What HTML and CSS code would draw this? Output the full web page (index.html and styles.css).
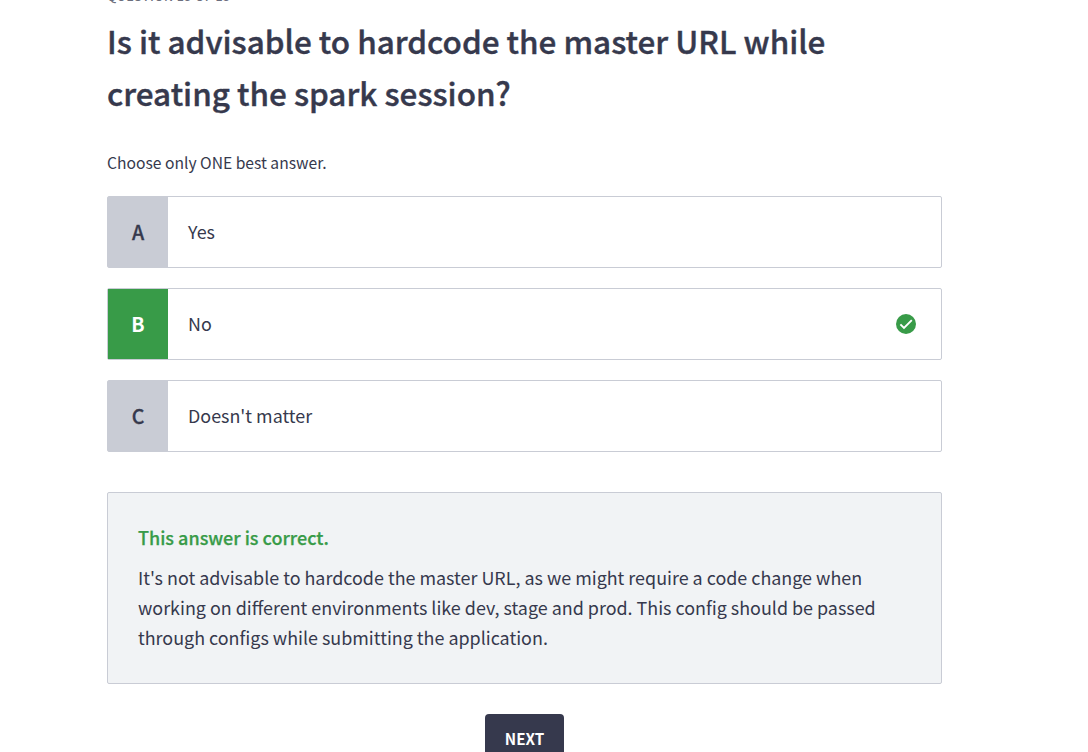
FILE: index.html
```html
<!DOCTYPE html>
<html lang="en">
<head>
<meta charset="utf-8">
<title>Quiz question</title>
<link rel="stylesheet" href="styles.css">
</head>
<body>
<main class="quiz">
  <p class="eyebrow">QUESTION 15 OF 15</p>
  <h1 class="title">Is it advisable to hardcode the master URL while<br>creating the spark session?</h1>
  <p class="hint">Choose only ONE best answer.</p>
  <ul class="options">
    <li class="option"><span class="key">A</span><span class="label">Yes</span></li>
    <li class="option option-correct"><span class="key">B</span><span class="label">No</span>
      <svg class="check" viewBox="0 0 20 20" width="20" height="20"><circle cx="10" cy="10" r="10" fill="#389b48"/><path d="M4.4 10.4 8 14 15.8 6.2" fill="none" stroke="#fff" stroke-width="1.9"/></svg>
    </li>
    <li class="option"><span class="key">C</span><span class="label">Doesn't matter</span></li>
  </ul>
  <section class="feedback">
    <h2 class="verdict">This answer is correct.</h2>
    <p class="reason">It's not advisable to hardcode the master URL, as we might require a code change when<br>working on different environments like dev, stage and prod. This config should be passed<br>through configs while submitting the application.</p>
  </section>
  <button class="next" type="button">NEXT</button>
</main>
</body>
</html>
```
FILE: styles.css
```css
* { box-sizing: border-box; }
html, body { height: 100%; margin: 0; overflow: hidden; }
body {
  background: #fff;
  color: #36394d;
  font-family: "Noto Sans CJK SC", "Open Sans", sans-serif;
}
h1, h2, p, ul { margin: 0; padding: 0; }
.quiz {
  display: flex;
  flex-direction: column;
  width: 835px;
  margin-left: 107px;
}
.eyebrow {
  height: 20px;
  margin-top: -14px;
  font-size: 12.5px;
  line-height: 20px;
  font-weight: 500;
  letter-spacing: 0.38px;
  color: #6b6e7d;
  white-space: nowrap;
}
.title {
  margin-top: 9px;
  font-size: 31.46px;
  line-height: 52px;
  font-weight: 500;
  -webkit-text-stroke: 0.4px currentColor;
  white-space: nowrap;
}
.hint {
  margin-top: 32px;
  font-size: 15.65px;
  line-height: 24px;
}
.options {
  display: flex;
  flex-direction: column;
  gap: 20px;
  margin-top: 21px;
  list-style: none;
}
.option {
  display: flex;
  align-items: center;
  height: 72px;
  border: 1px solid #c9ccd5;
  border-radius: 2px;
}
.key {
  display: flex;
  align-items: center;
  justify-content: center;
  align-self: stretch;
  width: 60px;
  padding-bottom: 2px;
  background: #c9ccd5;
  font-size: 19.6px;
  font-weight: 500;
  -webkit-text-stroke: 0.3px currentColor;
}
.option-correct .key { background: #389b48; color: #fff; font-weight: 700; -webkit-text-stroke: 0; }
.label { flex: 1; padding: 0 0 2px 20px; font-size: 17.9px; line-height: 30px; }
.check { margin-right: 25px; }
.feedback {
  height: 192px;
  margin-top: 40px;
  padding: 29px 30px;
  background: #f1f3f5;
  border: 1px solid #c9ccd5;
  border-radius: 2px;
  white-space: nowrap;
}
.verdict {
  font-size: 18px;
  line-height: 30px;
  font-weight: 500;
  -webkit-text-stroke: 0.25px currentColor;
  color: #389b48;
}
.reason { margin-top: 10px; font-size: 17.91px; line-height: 30px; }
.next {
  align-self: center;
  width: 79px;
  height: 50px;
  margin-top: 30px;
  padding: 0 0 2px;
  border: 0;
  border-radius: 4px;
  background: #36394d;
  color: #fff;
  font: 700 15.2px/48px "Noto Sans CJK SC", "Open Sans", sans-serif;
}
```
